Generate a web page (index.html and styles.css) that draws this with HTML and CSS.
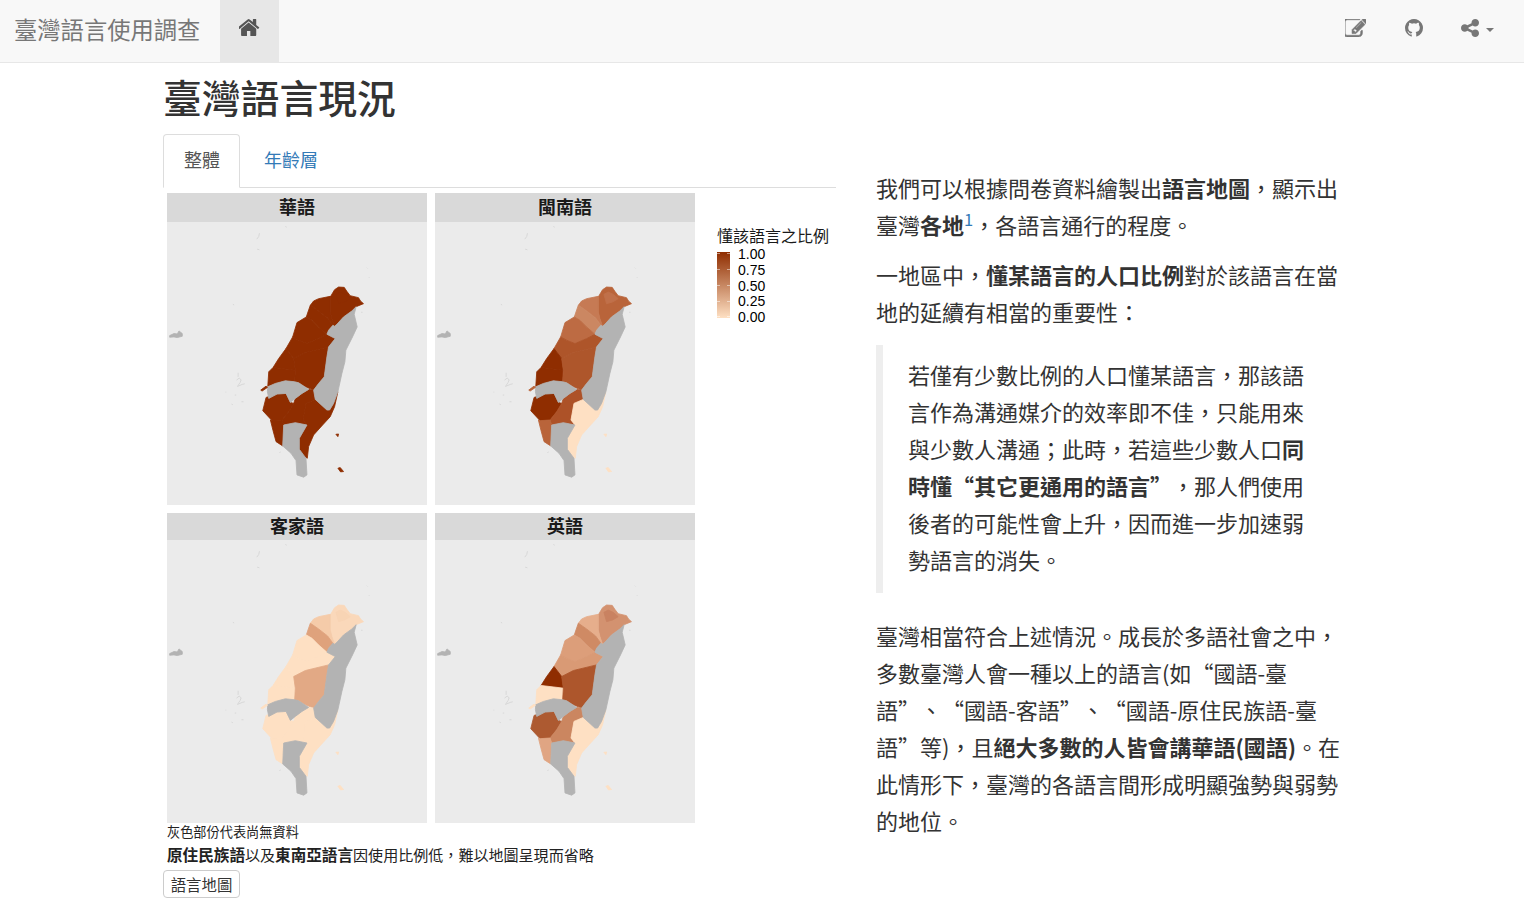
FILE: index.html
```html
<!DOCTYPE html>
<html lang="zh-TW">
<head>
    <meta charset="UTF-8">
    <title>臺灣語言使用調查</title>
    <link rel="stylesheet" href="styles.css">
</head>
<body>
    <!-- map shapes, the colours come from the .map-* classes -->
    <svg class="defs" width="0" height="0" aria-hidden="true">
        <symbol id="taiwan" viewBox="14 96 782 848">
            <polygon class="r-ne" points="505,320 518,298 530,290 547,291 555,303 565,316 590,322 596,332 605,340 583,349 570,362 545,380 525,402 518,408 510,385 505,365"/>
            <polygon class="r-tp" points="522,312 535,305 550,312 565,325 548,335 530,340"/>
            <polygon class="r-ty" points="445,345 455,332 470,325 505,318 505,365 510,385 518,408 513,405 497,383 470,362 450,348"/>
            <polygon class="r-hc" points="433,380 438,365 445,345 450,348 470,362 497,383 513,405 500,420 495,432 470,410 450,390"/>
            <polygon class="r-ml" points="405,397 433,380 450,390 470,410 495,432 470,445 435,460 410,450 392,440"/>
            <polygon class="r-tc" points="392,440 410,450 435,460 470,445 495,432 520,445 500,470 430,487 395,505 372,475"/>
            <polygon class="r-ch" points="372,475 395,505 400,540 333,532 350,505"/>
            <polygon class="r-yl" points="333,532 400,540 398,575 370,572 340,580 317,590 320,545"/>
            <polygon class="r-nt" points="395,505 430,487 500,470 495,500 487,560 470,580 455,600 430,590 410,578 398,575 400,540"/>
            <polygon class="r-tn" points="312,622 345,612 372,610 385,637 395,640 380,665 360,690 330,692 302,662"/>
            <polygon class="r-ks" points="395,640 400,625 420,610 440,598 455,600 460,628 432,640 423,690 435,705 400,698 365,705 360,690 380,665"/>
            <polygon class="r-pt" points="325,690 330,692 360,690 365,705 362,768 342,755 333,722"/>
            <polygon class="r-tt" points="460,628 495,660 503,660 515,640 520,605 528,605 518,650 505,680 482,705 455,735 440,770 436,805 420,795 412,778 412,745 435,705 423,690 432,640"/>
            <polygon class="r-na" points="317,590 340,580 370,572 398,575 410,578 440,598 420,610 400,625 385,637 372,610 345,612 320,625 316,605"/>
            <polygon class="r-na" points="365,705 400,698 435,705 412,745 412,778 432,805 435,855 425,862 405,855 402,812 387,790 362,768"/>
            <polygon class="r-na" points="583,349 577,372 586,410 572,440 552,480 549,515 540,550 528,605 515,640 503,660 495,660 460,628 455,600 470,580 487,560 495,500 500,470 520,445 495,432 500,420 513,405 518,408 525,402 545,380 570,362"/>
            <polygon class="r-sl" points="296,600 312,588 316,592 300,603"/>
            <polygon class="r-tt" points="522,733 530,732 528,740"/>
            <polygon class="r-tt" points="528,835 535,833 545,845 536,846"/>
            <polygon class="r-na" points="22,436 35,430 45,431 50,422 60,430 60,438 45,442 35,440 22,441"/>
            <path class="islet" d="M223 570l8-6 6 5-3 8-8 12 14-6 8-2M228 548v12M218 615h4M208 642l4 2M238 635h6M190 606h2M292 128l-2 10-6 8M285 176l7 2M370 108l4 2M212 342l4 2M615 232l2 2M622 260v2M598 366h4M352 788l4-2"/>
        </symbol>
    </svg>

    <nav class="navbar">
        <a class="brand" href="#">臺灣語言使用調查</a>
        <a class="nav-home" href="#">
            <svg class="icon-home" viewBox="97 250 1598 1290"><path d="M1408 992v480q0 26-19 45t-45 19h-384v-384h-256v384h-384q-26 0-45-19t-19-45v-480q0-1 .5-3t.5-3l575-474 575 474q1 2 1 6zm223-69l-62 74q-8 9-21 11h-3q-13 0-21-7l-692-577-692 577q-12 8-24 7-13-2-21-11l-62-74q-8-10-7-23.5t11-21.5l719-599q32-26 76-26t76 26l244 204v-195q0-14 9-23t23-9h192q14 0 23 9t9 23v408l219 182q10 8 11 21.5t-7 23.5z"/></svg>
        </a>
        <div class="nav-right">
            <a class="nav-edit" href="#">
                <svg class="icon-edit" viewBox="128 200 1536 1336"><path d="M888 1184l116-116-152-152-116 116v56h96v96h56zm440-720q-16-16-33 1l-350 350q-17 17-1 33t33-1l350-350q17-17 1-33zm80 594v190q0 119-84.5 203.5t-203.5 84.5h-832q-119 0-203.5-84.5t-84.5-203.5v-832q0-119 84.5-203.5t203.5-84.5h832q63 0 117 25 15 7 18 23 3 17-9 29l-49 49q-14 14-32 8-23-6-45-6h-832q-66 0-113 47t-47 113v832q0 66 47 113t113 47h832q66 0 113-47t47-113v-126q0-13 9-22l64-64q15-15 35-7t20 29zm-96-738l288 288-672 672h-288v-288zm444 132l-92 92-288-288 92-92q28-28 68-28t68 28l152 152q28 28 28 68t-28 68z"/></svg>
            </a>
            <a class="nav-github" href="#">
                <svg class="icon-github" viewBox="0 128 1536 1536"><path d="M768 128q209 0 385.5 103t279.5 279.5 103 385.5q0 251-146.5 451.5t-378.5 277.5q-27 5-40-7t-13-30q0-3 .5-76.5t.5-134.5q0-97-52-142 57-6 102.5-18t94-39 81-66.5 53-105 20.5-150.5q0-119-79-206 37-91-8-204-28-9-81 11t-92 44l-38 24q-93-26-192-26t-192 26q-16-11-42.5-27t-83.5-38.5-85-13.5q-45 113-8 204-79 87-79 206 0 85 20.5 150t52.5 105 80.5 67 94 39 102.5 18q-39 36-49 103-21 10-45 15t-57 5-65.5-21.5-55.5-62.5q-19-32-48.5-52t-49.5-24l-20-3q-21 0-29 4.5t-5 11.5 9 14 13 12l7 5q22 10 43.5 38t31.5 51l10 23q13 38 44 63t67 32 69.5 7 55.5-3.5l23-4q0 38 .5 88.5t.5 54.5q0 18-13 30t-40 7q-232-77-378.5-277.5t-146.5-451.5q0-209 103-385.5t279.5-279.5 385.5-103z"/></svg>
            </a>
            <a class="nav-share" href="#">
                <svg class="icon-share" viewBox="128 128 1536 1536"><path d="M1344 1024q133 0 226.5 93.5t93.5 226.5-93.5 226.5-226.5 93.5-226.5-93.5-93.5-226.5q0-12 2-34l-360-180q-92 86-218 86-133 0-226.5-93.5t-93.5-226.5 93.5-226.5 226.5-93.5q126 0 218 86l360-180q-2-22-2-34 0-133 93.5-226.5t226.5-93.5 226.5 93.5 93.5 226.5-93.5 226.5-226.5 93.5q-126 0-218-86l-360 180q2 22 2 34t-2 34l360 180q92-86 218-86z"/></svg>
                <span class="caret"></span>
            </a>
        </div>
    </nav>

    <main class="page">
        <h1>臺灣語言現況</h1>
        <div class="columns">
            <section class="left">
                <ul class="tabs">
                    <li class="tab active"><a href="#">整體</a></li>
                    <li class="tab"><a href="#">年齡層</a></li>
                </ul>
                <div class="figure">
                    <div class="facets">
                        <div class="facet">
                            <div class="strip">華語</div>
                            <svg class="map map-hua"><use href="#taiwan"/></svg>
                        </div>
                        <div class="facet">
                            <div class="strip">閩南語</div>
                            <svg class="map map-min"><use href="#taiwan"/></svg>
                        </div>
                        <div class="facet">
                            <div class="strip">客家語</div>
                            <svg class="map map-hak"><use href="#taiwan"/></svg>
                        </div>
                        <div class="facet">
                            <div class="strip">英語</div>
                            <svg class="map map-eng"><use href="#taiwan"/></svg>
                        </div>
                    </div>
                    <div class="legend">
                        <div class="legend-title">懂該語言之比例</div>
                        <div class="legend-body">
                            <div class="legend-bar"></div>
                            <div class="legend-labels">
                                <span>1.00</span>
                                <span>0.75</span>
                                <span>0.50</span>
                                <span>0.25</span>
                                <span>0.00</span>
                            </div>
                        </div>
                    </div>
                </div>
                <p class="note-small">灰色部份代表尚無資料</p>
                <p class="note"><b>原住民族語</b>以及<b>東南亞語言</b>因使用比例低，難以地圖呈現而省略</p>
                <button class="map-button">語言地圖</button>
            </section>

            <section class="right">
                <p>我們可以根據問卷資料繪製出<b>語言地圖</b>，顯示出臺灣<b>各地</b><sup><a href="#">1</a></sup>，各語言通行的程度。</p>
                <p>一地區中，<b>懂某語言的人口比例</b>對於該語言在當地的延續有相當的重要性：</p>
                <blockquote>若僅有少數比例的人口懂某語言，那該語言作為溝通媒介的效率即不佳，只能用來與少數人溝通；此時，若這些少數人口<b>同時懂“其它更通用的語言”</b>，那人們使用後者的可能性會上升，因而進一步加速弱勢語言的消失。</blockquote>
                <p>臺灣相當符合上述情況。成長於多語社會之中，多數臺灣人會一種以上的語言(如“國語-臺語”、“國語-客語”、“國語-原住民族語-臺語”等)，且<b>絕大多數的人皆會講華語(國語)</b>。在此情形下，臺灣的各語言間形成明顯強勢與弱勢的地位。</p>
            </section>
        </div>
    </main>
</body>
</html>
```

FILE: styles.css
```css
* {
    box-sizing: border-box;
}

body {
    margin: 0;
    background-color: #fff;
    color: #333;
    font-family: "Liberation Sans", "Noto Sans CJK TC", sans-serif;
    font-size: 14px;
    text-spacing-trim: space-all;
}

a {
    text-decoration: none;
}

.defs {
    display: block;
    height: 0;
}

/* navbar */
.navbar {
    display: flex;
    height: 63px;
    background-color: #f8f8f8;
    border-bottom: 1px solid #e7e7e7;
}

.brand {
    width: 220px;
    padding-left: 14px;
    color: #777;
    font-size: 23.3px;
    line-height: 62px;
}

.nav-home {
    display: flex;
    justify-content: center;
    width: 59px;
    padding-top: 19px;
    background-color: #e7e7e7;
}

.icon-home {
    width: 21px;
    height: 17px;
    fill: #555;
}

.nav-right {
    display: flex;
    margin-left: auto;
}

.nav-right a {
    display: flex;
    padding-top: 19px;
}

.nav-right svg {
    fill: #777;
}

.nav-edit {
    padding-left: 20px;
    padding-right: 20px;
}

.nav-github {
    padding-left: 19px;
    padding-right: 19px;
}

.nav-share {
    padding-left: 19px;
    padding-right: 30px;
}

.icon-edit {
    width: 21px;
    height: 18px;
    stroke: #777;
    stroke-width: 45;
}

.icon-github {
    width: 18px;
    height: 18px;
}

.icon-share {
    width: 18px;
    height: 18px;
}

.caret {
    width: 0;
    height: 0;
    margin-top: 9px;
    margin-left: 7px;
    border-top: 4px solid #777;
    border-left: 4px solid transparent;
    border-right: 4px solid transparent;
}

/* page */
.page {
    padding-left: 163px;
}

h1 {
    height: 71px;
    margin: 0;
    font-size: 38.8px;
    font-weight: 500;
    line-height: 73px;
}

.columns {
    display: flex;
    gap: 40px;
    align-items: flex-start;
}

.left {
    width: 673px;
}

.right {
    width: 470px;
    padding-top: 35px;
    font-family: "Noto Sans CJK TC", "Liberation Sans", sans-serif;
    font-size: 22px;
    line-height: 37px;
}

.right p {
    margin: 0 0 13px;
}

.right sup {
    font-size: 75%;
    line-height: 0;
}

.right sup a {
    color: #337ab7;
}

blockquote {
    width: 429px;
    margin: 15px 0 24px;
    padding: 11px 0 15px 25px;
    border-left: 7px solid #eee;
}

/* tabs */
.tabs {
    display: flex;
    gap: 2px;
    height: 54px;
    margin: 0;
    padding: 0;
    list-style: none;
    border-bottom: 1px solid #ddd;
}

.tab {
    height: 54px;
    padding: 0 21px;
    border: 1px solid transparent;
    border-radius: 4px 4px 0 0;
    font-size: 18px;
    line-height: 52px;
}

.tab a {
    color: #337ab7;
}

.tab.active {
    padding: 0 19px 0 20px;
    background-color: #fff;
    border-color: #ddd #ddd #fff;
}

.tab.active a {
    color: #555;
}

/* figure */
.figure {
    display: flex;
    padding: 5px 0 0 4px;
}

.facets {
    display: grid;
    grid-template-columns: 260px 260px;
    gap: 8px;
}

.strip {
    display: flex;
    justify-content: center;
    align-items: center;
    height: 29px;
    padding-bottom: 4px;
    background-color: #d9d9d9;
    color: #1a1a1a;
    font-size: 18px;
    font-weight: bold;
}

.facet:nth-child(n+3) .strip {
    height: 27px;
}

.map {
    display: block;
    width: 260px;
    height: 283px;
    background-color: #ebebeb;
}

.map use {
    width: 260px;
    height: 283px;
}

.legend {
    margin-left: 22px;
    padding-top: 34px;
}

.legend-title {
    height: 25px;
    color: #1a1a1a;
    font-size: 16px;
    line-height: 20px;
    white-space: nowrap;
}

.legend-body {
    display: flex;
    gap: 8px;
}

.legend-bar {
    width: 13px;
    height: 66px;
    background:
        repeating-linear-gradient(transparent 0 1.5px, rgba(255, 255, 255, .5) 1.5px 2.5px, transparent 2.5px 15.75px) left / 3px 100% no-repeat,
        repeating-linear-gradient(transparent 0 1.5px, rgba(255, 255, 255, .5) 1.5px 2.5px, transparent 2.5px 15.75px) right / 3px 100% no-repeat,
        linear-gradient(#8f2d00, #fee0c3);
}

.legend-labels {
    display: flex;
    flex-direction: column;
    margin-top: -5px;
    color: #000;
    font-size: 14px;
    line-height: 15.75px;
}

/* notes under the figure */
.note-small {
    margin: 0;
    padding: 2px 0 0 4px;
    font-size: 13.2px;
    line-height: 16px;
    color: #222;
}

.note {
    margin: 3px 0 0;
    padding-left: 4px;
    font-size: 15.05px;
    line-height: 24px;
    color: #222;
}

.note b {
    font-size: 15.6px;
}

.map-button {
    display: block;
    width: 77px;
    height: 28px;
    margin-top: 2px;
    padding: 0;
    background-color: #fff;
    border: 1px solid #ccc;
    border-radius: 4px;
    color: #333;
    font-family: inherit;
    font-size: 15.4px;
}

/* region colours for each map */
#taiwan polygon {
    stroke-width: 2.5;
    stroke-linejoin: round;
    fill: var(--c);
    stroke: var(--c);
}

.islet {
    fill: none;
    stroke: #d4d4d4;
    stroke-width: 2.5;
}

.r-na { --c: #b3b3b3; }
.r-ne { --c: var(--ne); }
.r-tp { --c: var(--tp); }
.r-ty { --c: var(--ty); }
.r-hc { --c: var(--hc); }
.r-ml { --c: var(--ml); }
.r-tc { --c: var(--tc); }
.r-ch { --c: var(--ch); }
.r-yl { --c: var(--yl); }
.r-nt { --c: var(--nt); }
.r-tn { --c: var(--tn); }
.r-ks { --c: var(--ks); }
.r-pt { --c: var(--pt); }
.r-tt { --c: var(--tt); }
.r-sl { --c: var(--sl); }

.map-hua {
    --ne: #8f2d00; --tp: #8f2d00; --ty: #8f2d00; --hc: #8f2d00; --ml: #8f2d00; --tc: #8f2d00; --ch: #8f2d00;
    --yl: #8f2d00; --nt: #8f2d00; --tn: #8f2d00; --ks: #8f2d00; --pt: #8f2d00; --tt: #8f2d00; --sl: #8f2d00;
}

.map-min {
    --ne: #b9643a; --tp: #c0704a; --ty: #c67a54; --hc: #cb8762; --ml: #bd6b43; --tc: #ae552a; --ch: #8f2d00;
    --yl: #8f2d00; --nt: #ae562b; --tn: #8f2d00; --ks: #ad5228; --pt: #b9643a; --tt: #fee0c3; --sl: #b9643a;
}

.map-hak {
    --ne: #fad8ba; --tp: #f8d4b4; --ty: #f5cba9; --hc: #dfa27c; --ml: #fee0c3; --tc: #fee0c3; --ch: #fee0c3;
    --yl: #fee0c3; --nt: #e2a985; --tn: #fee0c3; --ks: #fee0c3; --pt: #fee0c3; --tt: #fee0c3; --sl: #fee0c3;
}

.map-eng {
    --ne: #d39270; --tp: #c98261; --ty: #e6ae8c; --hc: #cf8a64; --ml: #dc9e7a; --tc: #d99a75; --ch: #8f2d00;
    --yl: #fee0c3; --nt: #ad562c; --tn: #ad5a31; --ks: #cb8660; --pt: #e0a583; --tt: #fee0c3; --sl: #fee0c3;
}
```
